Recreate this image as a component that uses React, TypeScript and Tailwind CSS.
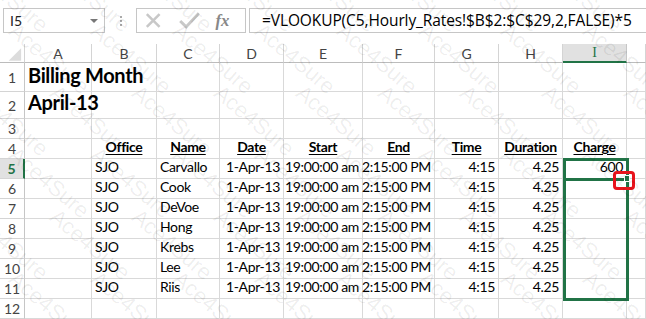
import React from "react";

const cols = [25, 67, 65, 63, 64, 79, 72, 64, 64, 64, 19];
const letters = ["", "A", "B", "C", "D", "E", "F", "G", "H", "I", ""];

const names = ["Carvallo", "Cook", "DeVoe", "Hong", "Krebs", "Lee", "Riis"];

type Cell = { text?: string; align?: "left" | "right" | "center"; cls?: string };

const alignCls = {
  left: "justify-start pl-[3px]",
  right: "justify-end pr-[3px]",
  center: "justify-center",
};

const Row = ({ num, h, cells, active }: { num: string; h: string; cells: Cell[]; active?: boolean }) => (
  <div className={`flex ${h}`}>
    <div
      className={`w-[25px] shrink-0 flex items-center justify-center border-b border-[#d4d4d4] text-[14px] ${
        active ? "bg-[#e1e1e1] text-[#217346] font-bold border-r-2 border-r-[#217346]" : "text-[#444] border-r border-r-[#c6c6c6]"
      }`}
    >
      {num}
    </div>
    {cols.slice(1).map((w, i) => {
      const c = cells[i] || {};
      return (
        <div
          key={i}
          style={{ width: w }}
          className={`shrink-0 flex items-end pb-[1px] border-r border-b border-[#d9d9d9] whitespace-nowrap text-[14px] tracking-[-0.35px] text-black ${
            alignCls[c.align || "left"]
          } ${c.cls || ""}`}
        >
          {c.text}
        </div>
      );
    })}
  </div>
);

const hdr = (t: string): Cell => ({ text: t, align: "center", cls: "font-bold underline underline-offset-2" });

export default function App() {
  return (
    <div className="relative w-[646px] h-[319px] overflow-hidden bg-white font-['Lato','Liberation_Sans',sans-serif]">
      {/* formula bar */}
      <div className="h-[44px] flex items-start pt-[8px]">
        <div className="ml-[3px] w-[102px] h-[25px] border border-[#c6c6c6] flex items-center justify-between pl-[6px] pr-[6px] text-[14px] text-[#222]">
          <span>I5</span>
          <span className="w-0 h-0 border-l-[4px] border-r-[4px] border-t-[4px] border-l-transparent border-r-transparent border-t-[#777]" />
        </div>
        <div className="w-[31px] h-[25px] flex flex-col items-center justify-center gap-[2px]">
          <span className="w-[2px] h-[2px] bg-[#aaa]" />
          <span className="w-[2px] h-[2px] bg-[#aaa]" />
          <span className="w-[2px] h-[2px] bg-[#aaa]" />
        </div>
        <div className="w-[110px] h-[25px] border border-[#c6c6c6] flex items-center">
          <svg width="110" height="23" viewBox="0 0 110 23">
            <path d="M10 5 L23 18 M23 5 L10 18" stroke="#c8c8c8" strokeWidth="2.6" fill="none" />
            <path d="M44 12 L50 18 L63 4" stroke="#c8c8c8" strokeWidth="3" fill="none" />
            <text x="80" y="17" fontFamily="'Liberation Serif',serif" fontStyle="italic" fontWeight="bold" fontSize="17" fill="#888">
              fx
            </text>
          </svg>
        </div>
        <div className="ml-[3px] flex-1 h-[25px] border border-r-0 border-[#c6c6c6] flex items-center pl-[12px] text-[15.5px] text-black font-['Open_Sans',sans-serif] tracking-[-0.1px]">
          =VLOOKUP(C5,Hourly_Rates!$B$2:$C$29,2,FALSE)*5
        </div>
      </div>

      {/* column headers */}
      <div className="flex h-[19px]">
        {cols.map((w, i) => (
          <div
            key={i}
            style={{ width: w }}
            className={`shrink-0 flex items-center justify-center text-[14px] ${
              i === 9
                ? "bg-[#e1e1e1] text-[#217346] border-b-2 border-b-[#217346] border-r border-r-[#c6c6c6] font-['Liberation_Serif',serif]"
                : "text-[#444] border-b border-b-[#bcbcbc] border-r border-r-[#d4d4d4]"
            }`}
          >
            {i === 0 ? (
              <svg width="25" height="19" viewBox="0 0 25 19">
                <path d="M22 4 L22 17 L9 17 Z" fill="#dcdcdc" />
              </svg>
            ) : (
              letters[i]
            )}
          </div>
        ))}
      </div>

      <Row num="1" h="h-[29px]" cells={[{ text: "Billing Month", cls: "font-bold text-[20px] tracking-[-0.2px]" }]} />
      <Row num="2" h="h-[27px]" cells={[{ text: "April-13", cls: "font-bold text-[20px] tracking-[-0.2px]" }]} />
      <Row num="3" h="h-[20px]" cells={[]} />
      <Row
        num="4"
        h="h-[20px]"
        cells={[{}, hdr("Office"), hdr("Name"), hdr("Date"), hdr("Start"), hdr("End"), hdr("Time"), hdr("Duration"), hdr("Charge")]}
      />
      {names.map((n, i) => (
        <Row
          key={n}
          num={String(5 + i)}
          h="h-[20px]"
          active={i === 0}
          cells={[
            {},
            { text: "SJO" },
            { text: n },
            { text: "1-Apr-13", align: "right" },
            { text: "19:00:00 am", align: "right" },
            { text: "2:15:00 PM", align: "right" },
            { text: "4:15", align: "right" },
            { text: "4.25", align: "right" },
            { text: i === 0 ? "600" : "", align: "right" },
          ]}
        />
      ))}
      <Row num="12" h="h-[20px]" cells={[]} />

      {/* selection */}
      <div className="absolute left-[563px] top-[158px] w-[66px] h-[143px] border-[3px] border-[#217346]" />
      <div className="absolute left-[563px] top-[178px] w-[66px] h-[3px] bg-[#217346]" />
      <div className="absolute left-[624px] top-[175px] w-[6px] h-[7px] bg-[#217346] border border-white" />
      <div className="absolute left-[613px] top-[171px] w-[22px] h-[19px] rounded-[4px] border-[3px] border-[#e8141c]" />

      {/* watermark */}
      <div className="absolute inset-0 pointer-events-none overflow-hidden">
        {Array.from({ length: 6 }).map((_, r) =>
          Array.from({ length: 9 }).map((_, c) => (
            <span
              key={`${r}-${c}`}
              style={{ left: c * 82 - 40 + (r % 2) * 41, top: r * 62 - 20 }}
              className="absolute rotate-[40deg] text-[22px] text-black/[0.07] font-['Liberation_Sans',sans-serif] whitespace-nowrap"
            >
              Ace4Sure
            </span>
          ))
        )}
      </div>
    </div>
  );
}
